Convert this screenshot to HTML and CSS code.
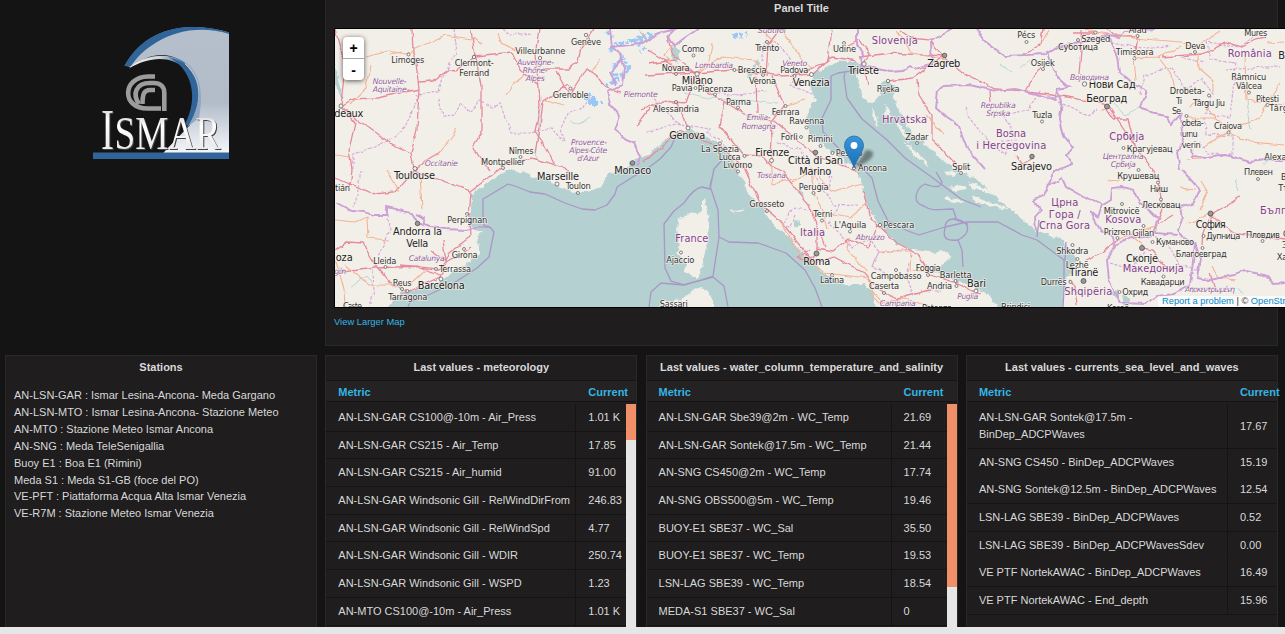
FILE: index.html
```html
<!DOCTYPE html>
<html lang="en">
<head>
<meta charset="utf-8">
<title>Ismar stations</title>
<link rel="stylesheet" href="styles.css">
</head>
<body>
<main class="dashboard">
<div class="row row-top">
<div class="logo-cell">
<svg class="logo" viewBox="80 15 160 155" width="160" height="155">
<defs>
<linearGradient id="sky" x1="0" y1="0" x2="0" y2="1"><stop offset="0" stop-color="#b5c0cc"/><stop offset=".6" stop-color="#b2bcc9"/><stop offset="1" stop-color="#f5f6fa"/></linearGradient>
<linearGradient id="foam" x1="0" y1="0" x2="1" y2="0"><stop offset="0" stop-color="#f2f2ee"/><stop offset=".55" stop-color="#cfd3d6"/><stop offset="1" stop-color="#316499"/></linearGradient>
<linearGradient id="metal" x1="0" y1="0" x2="0" y2="1"><stop offset="0" stop-color="#bbb"/><stop offset=".35" stop-color="#fff"/><stop offset="1" stop-color="#e2e2e2"/></linearGradient>
</defs>
<path d="M124.500 66C137 44 159 28 190 27.300C205 27 218 29 229 32.500V153H163L190 125C200 100 196 75 182 62C170 52 150 52 131 67Z" fill="url(#sky)"/>
<path d="M124.500 66C137 42 160 27.500 191 27C206 27 219 29 229 32.500V34C203 26 177 30 157 42C145 49 137 57 131 66Z" fill="#316499"/>
<path d="M178 58C199 70 203 90 196 108C194 115 190 122 187 127L199 118C205 88 198 66 178 58Z" fill="#91a8c0"/>
<path d="M131 67C148 54 176 52 188 68C198 82 198 101 186 127L163 153H93V98L124 66Z" fill="#141414"/>
<path d="M129 68.500C141 55 171 51 185 63L184 68C170 55 148 57 129 68.500Z" fill="url(#foam)"/>
<path d="M168 57C203 66 205 101 188 126L185 124C199 98 192 68 168 57Z" fill="#316499"/>
<g fill="none" stroke="#9c9c9c" stroke-width="4.600"><path d="M155 76.500H148C122 77 121 109 148 108.500H161"/><path d="M164.300 111V93C164.300 86 160 83 154 83H150C136 83 132 94 139 104"/><path d="M155 90H150C144 90 142.500 94 142.500 104"/></g>
<g class="logo-text"><text x="101" y="149" font-size="56" textLength="13" lengthAdjust="spacingAndGlyphs">I</text><text x="114.500" y="149" font-size="46" textLength="106" lengthAdjust="spacingAndGlyphs">SMAR</text></g>
<path d="M93 152.500H229V159H93Z" fill="#316499"/>
</svg>
</div>
<section class="panel map-panel">
<h2 class="panel-title">Panel Title</h2>
<div class="map">
<svg class="map-canvas" viewBox="335 29 950 278" width="950" height="278">
<defs>
<filter id="rough" x="-5%" y="-5%" width="110%" height="110%"><feTurbulence type="fractalNoise" baseFrequency=".16" numOctaves="3" seed="4"/><feDisplacementMap in="SourceGraphic" scale="6" xChannelSelector="R" yChannelSelector="G"/></filter>
<filter id="wobble" x="-5%" y="-5%" width="110%" height="110%"><feTurbulence type="fractalNoise" baseFrequency=".09" numOctaves="2" seed="9"/><feDisplacementMap in="SourceGraphic" scale="5" xChannelSelector="R" yChannelSelector="G"/></filter>
<filter id="blur"><feGaussianBlur stdDeviation="1.500"/></filter>
<linearGradient id="pin" x1="0" y1="0" x2="0" y2="1"><stop offset="0" stop-color="#3a96d8"/><stop offset="1" stop-color="#1a6fb5"/></linearGradient>
</defs>
<rect x="330" y="24" width="960" height="290" fill="#f2efe9"/>
<g class="sea" filter="url(#rough)">
<path d="M386 312L393 299L403 292L425 287L440 282L453 272L472 260L479 253L479 245L477 237L483 232L475 230L470 223L471 207L472 195L482 187L495 177L505 172L525 172L533 178L544 177L555 184L565 190L578 193L592 190L602 187L605 178L615 170L625 167L635 158L645 157L665 140L678 132L692 130L712 140L725 147L737 163L738 175L743 177L747 193L758 203L770 220L777 228L785 233L795 245L808 258L815 265L828 277L848 285L865 285L873 295L877 312Z"/>
<path d="M863 65L845 60L832 65L815 73L810 83L812 93L817 100L808 107L807 127L812 137L832 152L853 167L858 172L863 187L868 207L878 225L895 242L912 250L932 252L948 251L951 258L942 265L933 270L955 280L975 287L988 295L1002 312H1062L1065 287L1068 277L1077 260L1070 248L1058 238L1037 232L1015 212L998 200L988 190L975 178L960 172L942 160L928 147L915 137L905 123L898 110L893 97L896 87L888 81L881 83L880 95L875 102L867 103L860 90L856 75Z"/>
<path d="M1110 292L1119 288L1119 300L1112 296ZM1122 295L1130 298L1129 307L1124 306ZM335 62L338 80L343 98L341 99L335 82ZM758 60L747 76L750 77L760 62ZM797 221a3 3 0 1 0 .1 0ZM800 189a3 3 0 1 0 .1 0ZM675 45L671 55L677 65L680 52ZM502 171L511 169L518 171L510 176Z"/>
</g>
<g class="land" filter="url(#rough)">
<path d="M705 198L707 213L709 237L703 260L698 279L685 272L687 263L677 253L680 247L677 230L678 220L690 213L702 212L702 200ZM663 312L662 302L682 300L697 287L707 290L714 303V312ZM730 209l8 2 7-3-4 4-11-1ZM884 103l6 8 1 10-5-9ZM895 118l12 16 2 9-11-17ZM904 142l17 13 9 12-17-13ZM872 107l4 8 3 13-5-8ZM944 172l8-1 6 3-6 2ZM945 197l17 3 3 3-19-2ZM949 187l14-2 4 4-12 2ZM967 182l20 7 6 6-21-7ZM971 196l31 10 8 5-34-9Z"/>
</g>
<g class="wet" filter="url(#rough)"><path d="M609 50L618 43L630 42L641 36L653 34M612 67L622 57L630 70L617 80L606 86M585 97L596 105L591 100M607 31L612 37M733 36l13-1M647 47l-7 4M632 40l10 5M590 101l8 2M613 75l7-1M590 94l-5 4M637 40L655 36M612 72L618 82M594 96V108M588 103H602"/></g>
<g class="streams" filter="url(#wobble)"><path d="M540 105L538 139L536 160M570 120L579 125L591 117M351 286L367 276L374 285M1247 101L1251 130M983 140l5 7M1020 68l9-8M1110 100L1125 115L1140 107M671 50l8-10M1262 165l12-6M1235 180l4 11M684 92L707 98L745 100L777 104M1238 287l5 7M1000 65l11 7"/></g>
<g class="region" filter="url(#wobble)">
<path d="M454 29L457 52L441 80L439 92L416 95L418 97L405 127L394 138L374 147L353 154L353 170M439 98L443 116L455 115L461 102L469 112L480 100L492 107L500 104L511 133L531 133L541 130L551 128L564 142L560 128L569 112L582 108L594 95M503 29L510 35L531 33M361 171L356 200L353 207M388 214L389 232L378 256M373 270L374 291L370 307M647 132L659 129L675 123L709 129L706 132L723 141L728 151M704 91L738 95L767 91M648 92L661 106L678 123M777 43L790 58L797 74L790 85L812 94M757 32L767 32L762 60M777 143L801 150L812 170M788 214L793 208L808 210M811 171L819 185L834 205L858 204M840 205L829 223L853 247L870 239L879 252L872 265L891 277M872 265L879 252L912 249M912 255L906 274L914 297M926 290L941 290M832 178L829 170L830 190M791 209L783 226L790 227L795 215M817 300L820 305"/>
<path d="M1040 90L1029 110L1003 115L1017 139L1002 140M1047 95L1087 115L1096 110M965 107L971 119L990 143L1005 155L1015 139M1112 43L1148 49L1170 45M1140 95L1144 75L1172 67L1185 90L1202 79L1213 94L1205 113L1230 117L1236 63L1211 60L1207 42L1240 47L1263 30M1205 118L1206 134L1233 136L1233 155L1207 154L1200 140M1225 70L1280 66M1174 55L1205 62M1151 235L1166 241L1179 265L1200 270M1145 252L1130 269L1110 263"/>
</g>
<g class="road" filter="url(#wobble)">
<path d="M412 29L413 53L416 63L419 88L417 130L411 153L414 168M471 29L475 57L482 85L482 130L473 145L478 155L489 170M539 29L535 55L539 88L540 105L535 132L542 142L555 166M411 153L390 143L370 128L357 121L341 106M341 106L353 99L378 98L419 89M419 82L432 81L449 70L455 71L475 56L512 52L520 69L538 85M335 29L345 65L343 85L341 106L355 123L349 150L352 170L350 187M539 69L569 69L578 62L581 47L594 29M570 96L557 72M570 94L586 69L600 80L606 88L622 92M414 170L425 161L440 152M414 169L427 176L471 191L484 181L502 166L531 158L560 166L567 169L570 173M414 170L395 192L374 194L335 177M471 191L469 217L470 237L450 252L440 277L400 295M335 251L347 242L363 243L377 267M335 273L376 268L417 266L440 275M443 240L446 262L431 250M377 267L390 283L408 292M400 265L438 269L472 247M536 153L539 136L543 101L569 84"/>
<path d="M648 50L674 66L697 73L734 70L783 76L812 74L832 57L857 61M697 74L707 92L725 102L743 113L774 121L806 147L818 157L850 168L859 174M697 74L690 91L686 103L662 101L641 110M676 101L689 129M725 102L720 126L743 155L764 156M772 76L784 105L771 121L772 139L771 158M756 76L757 113M797 74L819 65L828 62L832 29M697 75L672 54L667 35M645 75L697 72M780 29L768 45L766 76M863 64L870 55L860 40L848 46M860 57L890 53L943 56L930 40L910 38L900 31M864 67L868 84M888 81L913 78L943 56M943 56L966 75L995 89L1026 91M1026 91L1051 94L1104 104L1114 119L1128 119L1135 145M918 79L919 95L932 115L932 140L962 170M643 163L679 131L720 147L733 157L743 165L760 203L780 220L797 242L810 258M764 157L771 166L782 171L792 184L808 204L817 227L817 251M863 190L866 203L870 218L877 225L895 242L918 254L930 275L955 282L979 294M810 251L797 257L817 263L833 257L866 274L879 290L898 299L930 290M817 249L833 252L849 239L868 247L877 225M817 253L808 260M825 247L819 230M1026 91L1040 67M1080 30L1081 50L1079 75M1137 35L1136 59M1074 33L1095 33M1096 36L1134 37M1162 57L1202 54L1225 42L1242 47L1255 40L1267 38M989 91L990 102M1023 54L1040 45L1043 29M1107 104L1116 118L1131 140L1148 163L1159 181L1162 209L1152 235M1211 215L1232 202L1240 197M1211 215L1204 233L1203 244M1211 215L1232 232L1285 240M1119 238L1103 252L1085 260M1108 29L1117 37M1210 273L1215 290"/>
<path d="M1017 156L1023 164L1033 158M1069 279L1075 287L1077 305M1140 247L1152 250L1169 271M1173 215L1158 224M648 64L675 60M637 126L650 108"/>
</g>
<g class="minor" filter="url(#wobble)">
<path d="M370 65L366 88L350 105M366 57L388 51L407 54L413 50L445 35L471 39M335 155L350 157M389 54L402 52M335 220L355 222L367 217L368 238L390 240M345 307L344 289L335 258M345 265L369 285L410 285L426 270M386 170L399 192M420 174L422 208M437 155L449 140L457 129M473 37L482 45M497 33L502 44L522 52M507 95L515 83L525 75M543 100L565 106M589 73L600 60M640 30L647 42M674 44L664 55L672 63M712 43L709 61L696 74M698 73L722 57L754 60L769 74M764 32L775 43M780 29L795 50L811 68M771 121L756 119M782 106L806 100M771 157L773 184L797 178M733 163L735 171M792 182L814 171L831 192L863 183M811 171L814 192L824 213L828 228M824 213L850 218L868 203M779 220L802 258M810 260L824 273L869 278L872 292L890 307M849 240L848 249L867 272M877 251L911 251L910 270L937 272M868 292L879 303L905 299L931 307"/>
<path d="M897 31L912 53L945 60M927 116L944 134M1040 45L1048 30M1084 30L1133 38L1180 42L1195 48L1220 32M1134 58L1158 57L1180 46M1134 58L1136 80M1158 57L1172 75L1175 90M1198 54L1199 68L1213 80L1213 92M1186 118L1216 118L1229 130L1258 118L1280 83M1216 117L1197 100L1190 108M1229 133L1250 142L1285 145M1229 130L1204 147M1101 111L1109 106M1108 181L1120 180M1187 224L1211 213L1221 227M1133 238L1144 247M1179 188L1196 190M1245 54L1246 100L1260 102L1285 105M1267 43L1285 42M1186 160L1202 159M1200 210L1208 190L1202 180M1212 266L1218 278L1236 280M1119 239L1127 236L1158 225"/>
</g>
<g class="border" filter="url(#wobble)">
<path d="M610 29L612 47L621 55L624 67L622 85L607 92L610 104L619 115L614 130L625 139L635 143L641 158L636 166M335 202L352 211L363 212L374 215L387 215L387 207L411 213L417 223L430 227L445 229L466 230L475 227L490 227M415 215L425 219L423 226M623 59L610 73L617 84M610 47L641 44L656 34L675 29L668 36L674 47L680 41L698 29M857 29L857 44L863 55L861 66L874 68L890 72L902 71L910 66L915 69L932 65L931 41L953 29"/>
<path d="M977 29L986 42L1005 56L1045 54L1055 48L1075 43L1108 35L1120 39L1125 31L1155 29M1048 50L1052 68L1060 79L1069 87L1057 89L1055 100L1040 95L1015 89L995 91L970 85L943 86L938 91L936 108L946 117L958 125L968 150L985 169M1057 89L1062 101L1060 118L1064 136L1073 147L1066 155L1072 164L1054 172L1050 185M1108 35L1118 56L1120 72L1135 85L1147 91L1141 107L1151 113L1167 116L1170 125L1182 112L1180 119L1183 139L1177 152L1180 170M1192 149L1193 157L1207 158L1226 155L1250 162L1266 160L1285 160M1182 170L1200 190L1193 204L1180 207L1182 220L1178 230L1184 238L1195 243L1200 258L1197 278L1210 280L1234 275L1245 271L1265 275L1274 284L1285 283M1052 184L1062 178L1066 187L1080 195L1103 205L1111 200L1112 188L1122 187L1134 190L1140 204L1150 211L1157 218L1155 233L1178 235M1050 183L1044 195L1034 200L1041 210L1035 217L1036 232M1091 211L1098 217L1102 205M1091 211L1095 220L1101 230L1113 237L1115 247L1107 260L1109 280L1120 303L1147 304L1157 296L1174 294L1190 285L1195 244M1115 245L1131 237L1138 238L1152 235"/>
</g>
<g class="maritime">
<path d="M490 227L494 232L489 257L477 268L457 281L441 289L424 297L410 302L408 307M483 215L483 199L490 195L508 184L515 186L530 192L545 194L565 203L582 209L595 210L607 205L615 194L617 187L631 178L648 168L660 159L671 147L678 131M712 178L710 186L718 210L719 237L713 276L698 281L685 285L671 281L665 268L664 224L674 211L684 203Q694 188 702 187L710 189L714 169L724 158M719 237L729 242L758 243L786 253L805 270L815 288L822 307M649 307L651 292L661 283L683 285L713 277L724 286L728 307M483 215L484 226L490 227"/>
<path d="M845 73L844 77L847 98L862 119L887 140L905 158L933 178L961 199L981 207M831 76L831 100L822 118L823 132L842 152L860 166L872 178L878 201L888 221L908 231L919 235L945 227L967 222L998 222L1022 235L1037 240L1064 260L1064 290L1063 307M831 76L838 73L858 70M936 172L942 182Q941 190 925 184C916 188 911 203 924 206C932 212 940 209 953 209L956 218L953 219L968 224M945 228C942 240 948 241 958 240Q970 234 967 225C958 216 945 217 945 228M958 240L962 250L963 267M1037 237L1039 220M1066 242L1065 261"/>
</g>
<g class="places"><circle cx="408.500" cy="54.500" r="1.500"/><circle cx="474" cy="57" r="1.700"/><circle cx="540" cy="58" r="1.700"/><circle cx="586" cy="35" r="1.700"/><circle cx="570.500" cy="88.500" r="1.500"/><circle cx="341" cy="106" r="2"/><circle cx="415" cy="168.500" r="2"/><circle cx="503" cy="168" r="1.500"/><circle cx="520.500" cy="157" r="1.500"/><circle cx="557" cy="184" r="2"/><circle cx="578" cy="193" r="1.500"/><circle cx="467" cy="214" r="1.500"/><circle cx="464" cy="249" r="1.500"/><circle cx="436" cy="269" r="1.500"/><circle cx="441" cy="279" r="2"/><circle cx="385.500" cy="267" r="1.500"/><circle cx="402" cy="289" r="1.500"/><circle cx="407.500" cy="291" r="1.500"/><circle cx="693.500" cy="55.500" r="1.500"/><circle cx="767" cy="42" r="1.500"/><circle cx="844" cy="43" r="1.500"/><circle cx="864" cy="64" r="2.200"/><circle cx="888" cy="81" r="1.700"/><circle cx="697" cy="74" r="2.200"/><circle cx="676" cy="74" r="1.500"/><circle cx="734.500" cy="70" r="1.500"/><circle cx="763" cy="75" r="1.500"/><circle cx="794.500" cy="76" r="1.500"/><circle cx="811.500" cy="74.500" r="2"/><circle cx="695.500" cy="88" r="1.500"/><circle cx="715" cy="94.500" r="1.500"/><circle cx="738" cy="107.500" r="1.500"/><circle cx="676" cy="102" r="1.500"/><circle cx="785.500" cy="106" r="1.500"/><circle cx="688" cy="128" r="2"/><circle cx="720" cy="143.500" r="1.500"/><circle cx="744.500" cy="156" r="1.500"/><circle cx="738" cy="171.500" r="1.500"/><circle cx="771.500" cy="160.500" r="2"/><circle cx="801" cy="137" r="1.500"/><circle cx="806.500" cy="127.500" r="1.500"/><circle cx="820.500" cy="146" r="1.500"/><circle cx="832.500" cy="153" r="1.500"/><circle cx="854" cy="168" r="1.700"/><circle cx="917" cy="143" r="1.500"/><circle cx="961" cy="173" r="1.500"/><circle cx="813.500" cy="193" r="1.500"/><circle cx="767" cy="211" r="1.500"/><circle cx="822" cy="220.500" r="1.500"/><circle cx="850" cy="231.500" r="1.500"/><circle cx="880" cy="225" r="1.700"/><circle cx="681" cy="252.500" r="1.500"/><circle cx="832" cy="275" r="1.500"/><circle cx="896" cy="270" r="1.500"/><circle cx="928" cy="275" r="1.500"/><circle cx="955.500" cy="281" r="1.500"/><circle cx="956.500" cy="286" r="1.500"/><circle cx="884" cy="293" r="1.500"/><circle cx="976" cy="291" r="2"/><circle cx="1026.500" cy="42" r="1.500"/><circle cx="1043" cy="69" r="1.500"/><circle cx="1078" cy="40" r="1.500"/><circle cx="1095.500" cy="32.500" r="1.500"/><circle cx="1137.500" cy="36" r="1.500"/><circle cx="1134.500" cy="58.500" r="1.500"/><circle cx="1195" cy="52" r="1.500"/><circle cx="1084.500" cy="84" r="2.200"/><circle cx="1042" cy="121.500" r="1.500"/><circle cx="1209" cy="95.500" r="1.500"/><circle cx="1249" cy="92.500" r="1.500"/><circle cx="1267.500" cy="105" r="1.500"/><circle cx="1186.500" cy="116" r="1.500"/><circle cx="1228.500" cy="132.500" r="1.500"/><circle cx="1123.500" cy="148" r="1.500"/><circle cx="1138.500" cy="170" r="1.500"/><circle cx="1158" cy="182.500" r="1.500"/><circle cx="1161" cy="199.500" r="1.500"/><circle cx="1258" cy="179" r="1.500"/><circle cx="1122" cy="204" r="1.500"/><circle cx="1143.500" cy="226" r="1.500"/><circle cx="1117.500" cy="238" r="1.500"/><circle cx="1152.500" cy="242" r="1.500"/><circle cx="1203.500" cy="236" r="1.500"/><circle cx="1202.500" cy="248" r="1.500"/><circle cx="1262.500" cy="241" r="1.500"/><circle cx="1072.500" cy="245" r="1.500"/><circle cx="1077.500" cy="259" r="1.500"/><circle cx="1070.500" cy="282" r="1.500"/><circle cx="1163.500" cy="276.500" r="1.500"/><circle cx="1119.500" cy="292" r="1.500"/></g>
<g class="capitals"><circle cx="417.500" cy="223.500" r="2.300"/><circle cx="944.500" cy="55.500" r="2.300"/><circle cx="815.500" cy="152.500" r="2.300"/><circle cx="816.500" cy="253.500" r="2.500"/><circle cx="1107" cy="106.500" r="2.500"/><circle cx="1032" cy="156.500" r="2.300"/><circle cx="1210.500" cy="213.500" r="2.500"/><circle cx="1142" cy="248" r="2.500"/><circle cx="1083.500" cy="281" r="2.500"/><circle cx="632.500" cy="163" r="2.300"/></g>
<g class="label">
<text x="391.300" y="63.300" textLength="33">Limoges</text><text x="454.700" y="66.300" textLength="39">Clermont-</text><text x="459.300" y="75.700" textLength="30">Ferrand</text><text x="515.300" y="54.300" textLength="50">Villeurbanne</text><text x="571" y="44.700" textLength="30">Genève</text><text x="552.700" y="97.700" textLength="36">Grenoble</text><text x="508.700" y="153.700" textLength="25">Nîmes</text><text x="481" y="165.300" textLength="44">Montpellier</text><text x="335" y="190.700" textLength="15">tián</text><text x="565.700" y="189" textLength="25">Toulon</text><text x="447.300" y="223.300" textLength="40">Perpignan</text><text x="373.300" y="263.700" textLength="23">Lleida</text><text x="451.700" y="258.300" textLength="26">Girona</text><text x="439" y="272" textLength="32">Terrassa</text><text x="392.700" y="286.300" textLength="19">Reus</text><text x="388.300" y="300.300" textLength="39">Tarragona</text><text x="343" y="309" textLength="19">Caste</text>
<text x="681.700" y="52.300" textLength="23">Como</text><text x="755.300" y="51" textLength="24">Trento</text><text x="833" y="51.700" textLength="23">Udine</text><text x="661.700" y="71.300" textLength="28">Novara</text><text x="737.700" y="73" textLength="29">Brescia</text><text x="780.300" y="73" textLength="28">Padova</text><text x="749" y="84" textLength="27">Verona</text><text x="671.700" y="91" textLength="21">Pavia</text><text x="697.700" y="91.700" textLength="35">Piacenza</text><text x="876.700" y="91.700" textLength="23">Rijeka</text><text x="726" y="104.700" textLength="25">Parma</text><text x="653" y="111.700" textLength="46">Alessandria</text><text x="771.700" y="115" textLength="28">Ferrara</text><text x="789.300" y="124.300" textLength="35">Ravenna</text><text x="780.700" y="140" textLength="17">Forlì</text><text x="807.700" y="142.300" textLength="25">Rimini</text><text x="905.300" y="139.700" textLength="23">Zadar</text><text x="701" y="152.300" textLength="38">La Spezia</text><text x="718.700" y="159.600" textLength="22">Lucca</text><text x="835.700" y="156" textLength="27">Pesaro</text><text x="723.300" y="168.300" textLength="29">Livorno</text><text x="858" y="171" textLength="29">Ancona</text><text x="952.300" y="170.300" textLength="18">Split</text>
<text x="1017.300" y="38" textLength="18">Pécs</text><text x="1081.300" y="41.700" textLength="29">Szeged</text><text x="1128.700" y="33.300" textLength="18">Arad</text><text x="1058" y="49.700" textLength="40">Суботица</text><text x="1115.700" y="55" textLength="38">Timișoara</text><text x="1185.300" y="48.700" textLength="20">Deva</text><text x="1244.300" y="35.700" textLength="23">Mureș</text><text x="1030.700" y="65.700" textLength="24">Osijek</text><text x="1231.300" y="79.700" textLength="35">Râmnicu</text><text x="1236" y="88.700" textLength="26">Vâlcea</text><text x="1256" y="101.700" textLength="23">Pitești</text><text x="1193" y="105.700" textLength="32">Târgu Jiu</text><text x="1269.300" y="111" textLength="46">Târgoviște</text><text x="1169.700" y="94.300" textLength="35">Drobeta-</text><text x="1176" y="104" textLength="6">Ti</text><text x="1172" y="114" textLength="9">Se</text><text x="1181.700" y="126" textLength="22">obeta-</text><text x="1181.700" y="137" textLength="16">urnu</text><text x="1181.700" y="148" textLength="19">verin</text><text x="1032.300" y="118.300" textLength="20">Tuzla</text><text x="1214" y="129.300" textLength="28">Craiova</text><text x="1126.700" y="152" textLength="46">Крагујевац</text><text x="1264.300" y="159.700" textLength="43">Alexandria</text><text x="1244" y="175.300" textLength="29">Плевен</text><text x="1117.300" y="178.700" textLength="42">Крушевац</text><text x="1150" y="191.700" textLength="18">Ниш</text><text x="1281" y="180">Велико</text><text x="1278.300" y="191.300">Търново</text><text x="1141.700" y="207.700" textLength="39">Лесковац</text><text x="1103.700" y="213.700" textLength="36">Mitrovicë</text><text x="1103.700" y="234.700" textLength="27">Prizren</text><text x="1132.300" y="236.300" textLength="22">Gjilan</text><text x="1156" y="244.700" textLength="38">Куманово</text><text x="1206.300" y="239.300" textLength="34">Дупница</text><text x="1246" y="238.300" textLength="34">Пловдив</text><text x="1283" y="237">Ст</text><text x="1282" y="248">За</text><text x="1276.700" y="260.300">Хасково</text><text x="1175.700" y="257.300" textLength="51">Благоевград</text><text x="1140.700" y="285.300" textLength="44">Кавадарци</text><text x="1122.300" y="294.700" textLength="26">Охрид</text><text x="1056.300" y="254.300" textLength="32">Shkodra</text><text x="1065.700" y="268.300" textLength="23">Lezhë</text><text x="1040.700" y="285" textLength="26">Durrës</text><text x="1001" y="310" textLength="29">Brindisi</text><text x="1107" y="311" textLength="22">Korçë</text>
<text x="798.700" y="190" textLength="30">Perugia</text><text x="749.300" y="207.300" textLength="35">Grosseto</text><text x="813.300" y="217.300" textLength="19">Terni</text><text x="834.300" y="228" textLength="32">L'Aquila</text><text x="883.300" y="228.300" textLength="31">Pescara</text><text x="666.300" y="262.700" textLength="28">Ajaccio</text><text x="820" y="283.300" textLength="24">Latina</text><text x="915.700" y="271.300" textLength="25">Foggia</text><text x="870.700" y="279.300" textLength="51">Campobasso</text><text x="939.700" y="278.300" textLength="32">Barletta</text><text x="869" y="289.300" textLength="30">Caserta</text><text x="927" y="288.700" textLength="25">Andria</text><text x="659.700" y="306.700" textLength="28">Sassari</text><text x="922" y="311" textLength="30">Potenza</text>
</g>
<g class="label city">
<text x="334.300" y="117.300" textLength="29">deaux</text><text x="614.300" y="174" textLength="37">Monaco</text><text x="394" y="179.300" textLength="41">Toulouse</text><text x="537" y="179.700" textLength="42">Marseille</text><text x="393" y="235.300" textLength="49">Andorra la</text><text x="406.300" y="246.700" textLength="22">Vella</text><text x="335.700" y="261" textLength="17">oza</text><text x="417.700" y="289.300" textLength="47">Barcelona</text><text x="927.300" y="67.300" textLength="33">Zagreb</text><text x="848" y="74.300" textLength="31">Trieste</text><text x="681.700" y="84" textLength="31">Milano</text><text x="792.700" y="86" textLength="37">Venezia</text><text x="669.300" y="138.700" textLength="36">Genova</text><text x="755.300" y="156" textLength="34">Firenze</text><text x="788" y="164.300" textLength="55">Città di San</text><text x="799.300" y="174.700" textLength="32">Marino</text><text x="1278.300" y="59">Brașov</text><text x="1088.700" y="88" textLength="47">Нови Сад</text><text x="1086.300" y="101.700" textLength="41">Београд</text><text x="1011" y="169.700" textLength="41">Sarajevo</text><text x="1195.700" y="228.300" textLength="30">София</text><text x="1126" y="262.300" textLength="32">Скопје</text><text x="1069.300" y="276" textLength="29">Tiranë</text><text x="967" y="286.700" textLength="19">Bari</text><text x="803.300" y="265" textLength="27">Roma</text>
</g>
<g class="label area">
<text x="517" y="64.700" textLength="37">Auvergne-</text><text x="522.700" y="73" textLength="25">Rhône-</text><text x="525.700" y="81.300" textLength="19">Alpes</text><text x="372.700" y="83.700" textLength="34">Nouvelle-</text><text x="372.700" y="92" textLength="34">Aquitaine</text><text x="623.700" y="96.700" textLength="34">Piemonte</text><text x="571" y="144.700" textLength="36">Provence-</text><text x="569.300" y="153" textLength="38">Alpes-Côte</text><text x="577.300" y="161.300" textLength="22">d'Azur</text><text x="424.700" y="166" textLength="33">Occitanie</text><text x="408.700" y="260.700" textLength="36">Catalunya</text><text x="334.300" y="274" textLength="12">gón</text><text x="758" y="32.700" textLength="28">Südtirol</text><text x="695" y="68" textLength="38">Lombardia</text><text x="782.300" y="65.700" textLength="25">Veneto</text><text x="746.700" y="120" textLength="24">Emilia-</text><text x="741.700" y="128.700" textLength="34">Romagna</text><text x="1070" y="80" textLength="39">Војводина</text><text x="980.700" y="108" textLength="35">Republika</text><text x="986.300" y="116" textLength="24">Srpska</text><text x="1102.700" y="159" textLength="41">Централна</text><text x="1110.700" y="166.700" textLength="25">Србија</text><text x="1185" y="292.300" textLength="50">Αποκεντρωμένη</text><text x="957.300" y="299.300" textLength="21">Puglia</text><text x="757" y="178" textLength="29">Toscana</text><text x="855.700" y="239.700" textLength="29">Abruzzo</text><text x="879.700" y="306" textLength="36">Campania</text>
</g>
<g class="label country">
<text x="871.700" y="43.700" textLength="46">Slovenija</text><text x="882" y="122.700" textLength="45">Hrvatska</text><text x="1227.700" y="57" textLength="44">România</text><text x="996" y="137" textLength="30">Bosna</text><text x="976.300" y="148.700" textLength="70">i Hercegovina</text><text x="1109.300" y="140" textLength="35">Србија</text><text x="1105.300" y="222.700" textLength="36">Kosova</text><text x="1051.300" y="205.700" textLength="27">Црна</text><text x="1048.700" y="217.700" textLength="32">Гора /</text><text x="1039" y="229.300" textLength="51">Crna Gora</text><text x="1260" y="213.700" textLength="52">България</text><text x="1122.700" y="272" textLength="61">Македонија</text><text x="1064.300" y="295" textLength="48">Shqipëria</text><text x="800" y="236.300" textLength="25">Italia</text><text x="675.300" y="241.700" textLength="33">France</text>
</g>
<path d="M855 167L866 150Q876 150 872 157Q868 163 855 167Z" fill="#000" opacity=".4" filter="url(#blur)"/>
<path d="M854 168C852 160 844.500 152 844.500 145.500A9.500 9.500 0 0 1 863.500 145.500C863.500 152 856 160 854 168Z" fill="url(#pin)" stroke="#2a6ca5" stroke-width=".8"/>
<circle cx="854" cy="145.500" r="3.400" fill="#fff"/>
</svg>
<div class="zoom-control"><span class="zoom-button">+</span><span class="zoom-button">-</span></div>
<div class="attribution"><a>Report a problem</a> | © <a>OpenStreetMap</a></div>
</div>
<a class="larger-map">View Larger Map</a>
</section>
</div>
<div class="row row-bottom">
<section class="panel stations">
<h2 class="panel-title">Stations</h2>
<ul class="station-list">
<li>AN-LSN-GAR : Ismar Lesina-Ancona- Meda Gargano</li>
<li>AN-LSN-MTO : Ismar Lesina-Ancona- Stazione Meteo</li>
<li>AN-MTO : Stazione Meteo Ismar Ancona</li>
<li>AN-SNG : Meda TeleSenigallia</li>
<li>Buoy E1 : Boa E1 (Rimini)</li>
<li>Meda S1 : Meda S1-GB (foce del PO)</li>
<li>VE-PFT : Piattaforma Acqua Alta Ismar Venezia</li>
<li>VE-R7M : Stazione Meteo Ismar Venezia</li>
</ul>
</section>
<section class="panel meteo">
<h2 class="panel-title">Last values - meteorology</h2>
<div class="table-head"><span>Metric</span><span>Current</span></div>
<div class="table-body">
<div class="table-row"><span>AN-LSN-GAR CS100@-10m - Air_Press</span><span>1.01 K</span></div>
<div class="table-row"><span>AN-LSN-GAR CS215 - Air_Temp</span><span>17.85</span></div>
<div class="table-row"><span>AN-LSN-GAR CS215 - Air_humid</span><span>91.00</span></div>
<div class="table-row"><span>AN-LSN-GAR Windsonic Gill - RelWindDirFrom</span><span>246.83</span></div>
<div class="table-row"><span>AN-LSN-GAR Windsonic Gill - RelWindSpd</span><span>4.77</span></div>
<div class="table-row"><span>AN-LSN-GAR Windsonic Gill - WDIR</span><span>250.74</span></div>
<div class="table-row"><span>AN-LSN-GAR Windsonic Gill - WSPD</span><span>1.23</span></div>
<div class="table-row"><span>AN-MTO CS100@-10m - Air_Press</span><span>1.01 K</span></div>
<div class="table-row"><span></span><span></span></div>
<div class="scrollbar"><div class="thumb"></div></div>
</div>
</section>
<section class="panel water">
<h2 class="panel-title">Last values - water_column_temperature_and_salinity</h2>
<div class="table-head"><span>Metric</span><span>Current</span></div>
<div class="table-body">
<div class="table-row"><span>AN-LSN-GAR Sbe39@2m - WC_Temp</span><span>21.69</span></div>
<div class="table-row"><span>AN-LSN-GAR Sontek@17.5m - WC_Temp</span><span>21.44</span></div>
<div class="table-row"><span>AN-SNG CS450@2m - WC_Temp</span><span>17.74</span></div>
<div class="table-row"><span>AN-SNG OBS500@5m - WC_Temp</span><span>19.46</span></div>
<div class="table-row"><span>BUOY-E1 SBE37 - WC_Sal</span><span>35.50</span></div>
<div class="table-row"><span>BUOY-E1 SBE37 - WC_Temp</span><span>19.53</span></div>
<div class="table-row"><span>LSN-LAG SBE39 - WC_Temp</span><span>18.54</span></div>
<div class="table-row"><span>MEDA-S1 SBE37 - WC_Sal</span><span>0</span></div>
<div class="table-row"><span></span><span></span></div>
<div class="scrollbar"><div class="thumb"></div></div>
</div>
</section>
<section class="panel waves">
<h2 class="panel-title">Last values - currents_sea_level_and_waves</h2>
<div class="table-head"><span>Metric</span><span>Current</span></div>
<div class="table-body">
<div class="table-row tall"><span>AN-LSN-GAR Sontek@17.5m -<br>BinDep_ADCPWaves</span><span>17.67</span></div>
<div class="table-row open"><span>AN-SNG CS450 - BinDep_ADCPWaves</span><span>15.19</span></div>
<div class="table-row"><span>AN-SNG Sontek@12.5m - BinDep_ADCPWaves</span><span>12.54</span></div>
<div class="table-row"><span>LSN-LAG SBE39 - BinDep_ADCPWaves</span><span>0.52</span></div>
<div class="table-row open"><span>LSN-LAG SBE39 - BinDep_ADCPWavesSdev</span><span>0.00</span></div>
<div class="table-row"><span>VE PTF NortekAWAC - BinDep_ADCPWaves</span><span>16.49</span></div>
<div class="table-row"><span>VE PTF NortekAWAC - End_depth</span><span>15.96</span></div>
</div>
</section>
</div>
<footer class="footer"></footer>
</main>
</body>
</html>
```
FILE: styles.css
```css
* { box-sizing: border-box; }
body { margin: 0; background: #141414; color: #d8d9da; font: 11px/16.9px "Liberation Sans", Arial, sans-serif; overflow: hidden; }
.dashboard { width: 1285px; height: 634px; overflow: hidden; display: flex; flex-direction: column; }
.row { display: flex; }
.row-top { height: 355px; }
.row-bottom { height: 272px; padding-left: 5px; gap: 8.3px; overflow: hidden; }
.logo-cell { width: 325px; padding: 15px 0 0 80px; flex: none; }
.logo { display: block; }
.logo-text { font-family: "Liberation Serif", serif; fill: url(#metal); filter: drop-shadow(1.5px 1px .3px #444); }
.panel { background: #1f1d1d; border: 1px solid #292929; flex: none; }
.panel-title { margin: 0; font-size: 11px; line-height: 17px; font-weight: bold; text-align: center; color: #d8d9da; }
.map-panel { width: 953px; height: 347px; margin-top: -1px; padding-left: 8px; }
.map-panel .panel-title { margin-bottom: 11px; padding-right: 8px; }
.map { position: relative; width: 952px; height: 280px; border: 1px solid #000; background: #f2efe9; }
.map-canvas { display: block; }
.larger-map { display: block; margin-top: 6px; font-size: 9.4px; color: #33b5e5; }

.sea { fill: #b5d0d0; }
.land { fill: #f2efe9; }
.wet { fill: none; stroke: #99c8f5; stroke-width: 4; stroke-dasharray: 5 2 3 2; }
.streams { fill: none; stroke: #b9d7d6; stroke-width: 1; }
.region { fill: none; stroke: #d7aadb; stroke-width: 1.2; stroke-dasharray: 3 1.5; }
.road { fill: none; stroke: #e78a9d; stroke-width: 1.3; }
.minor { fill: none; stroke: #f5b394; stroke-width: 1.1; }
.border { fill: none; stroke: #cda0d6; stroke-width: 1.9; }
.maritime { fill: none; stroke: #a997c5; stroke-width: 1.3; stroke-linejoin: round; }
.places { fill: #f6f4ef; stroke: #555; stroke-width: .7; }
.capitals { fill: #999; stroke: #444; stroke-width: .7; }
.label { font-family: "DejaVu Sans", sans-serif; font-size: 8.3px; fill: #333; stroke: #f6f3ee; stroke-opacity: .75; stroke-width: 1.6px; paint-order: stroke; }
.label.city { font-size: 9.8px; fill: #222; }
.label.area { font-size: 7.8px; font-style: italic; fill: #925d9e; }
.label.country { font-size: 9.9px; fill: #853f8e; }

.zoom-control { position: absolute; left: 8px; top: 8px; width: 21px; height: 43px; border-radius: 4px; background: #fff; box-shadow: 0 1px 5px rgba(0,0,0,.65); color: #000; }
.zoom-button { display: block; height: 22px; font: bold 14px/22px "Liberation Sans", sans-serif; text-align: center; }
.zoom-button:first-child { border-bottom: 1px solid #aaa; }
.attribution { position: absolute; left: 823px; bottom: 0; width: 129px; height: 11px; padding-left: 4px; overflow: hidden; white-space: nowrap; background: rgba(255,255,255,.7); font-size: 9.3px; line-height: 10px; color: #333; }
.attribution a { color: #0088cc; }

.stations, .meteo, .water, .waves { width: 312px; height: 285px; padding-top: 3px; }
.stations .panel-title { margin-bottom: 11px; }
.station-list { list-style: none; margin: 0; padding: 0 8px; }
.meteo { --metric: 250px; }
.water { --metric: 245px; }
.waves { --metric: 261px; }
.meteo .panel-title, .water .panel-title, .waves .panel-title { margin-bottom: 4px; }
.table-head { display: grid; grid-template-columns: var(--metric) 60px; height: 22px; padding-top: 3px; background: #242222; border-top: 1px solid #141414; border-bottom: 1px solid #141414; line-height: 16px; font-weight: bold; color: #33b5e5; }
.table-head span { padding-left: 12px; }
.table-body { position: relative; height: 236px; margin-top: 2px; }
.table-row { display: grid; grid-template-columns: var(--metric) 1fr; height: 27.7px; border-bottom: 1px solid #141414; white-space: nowrap; }
.table-row span { padding: 5px 0 0 12px; }
.table-row span:first-child { border-right: 1px solid #141414; }
.table-row.open { border-bottom-color: transparent; }
.table-row.tall { height: 44.6px; }
.table-row.tall span:last-child { padding-top: 14px; }
.scrollbar { position: absolute; top: 0; right: 0; width: 10px; height: 236px; background: #e6e6e6; }
.thumb { height: 36px; background: #f08f68; }
.water .thumb { height: 183px; }
.footer { height: 7px; background: #e6e6e6; }
```
